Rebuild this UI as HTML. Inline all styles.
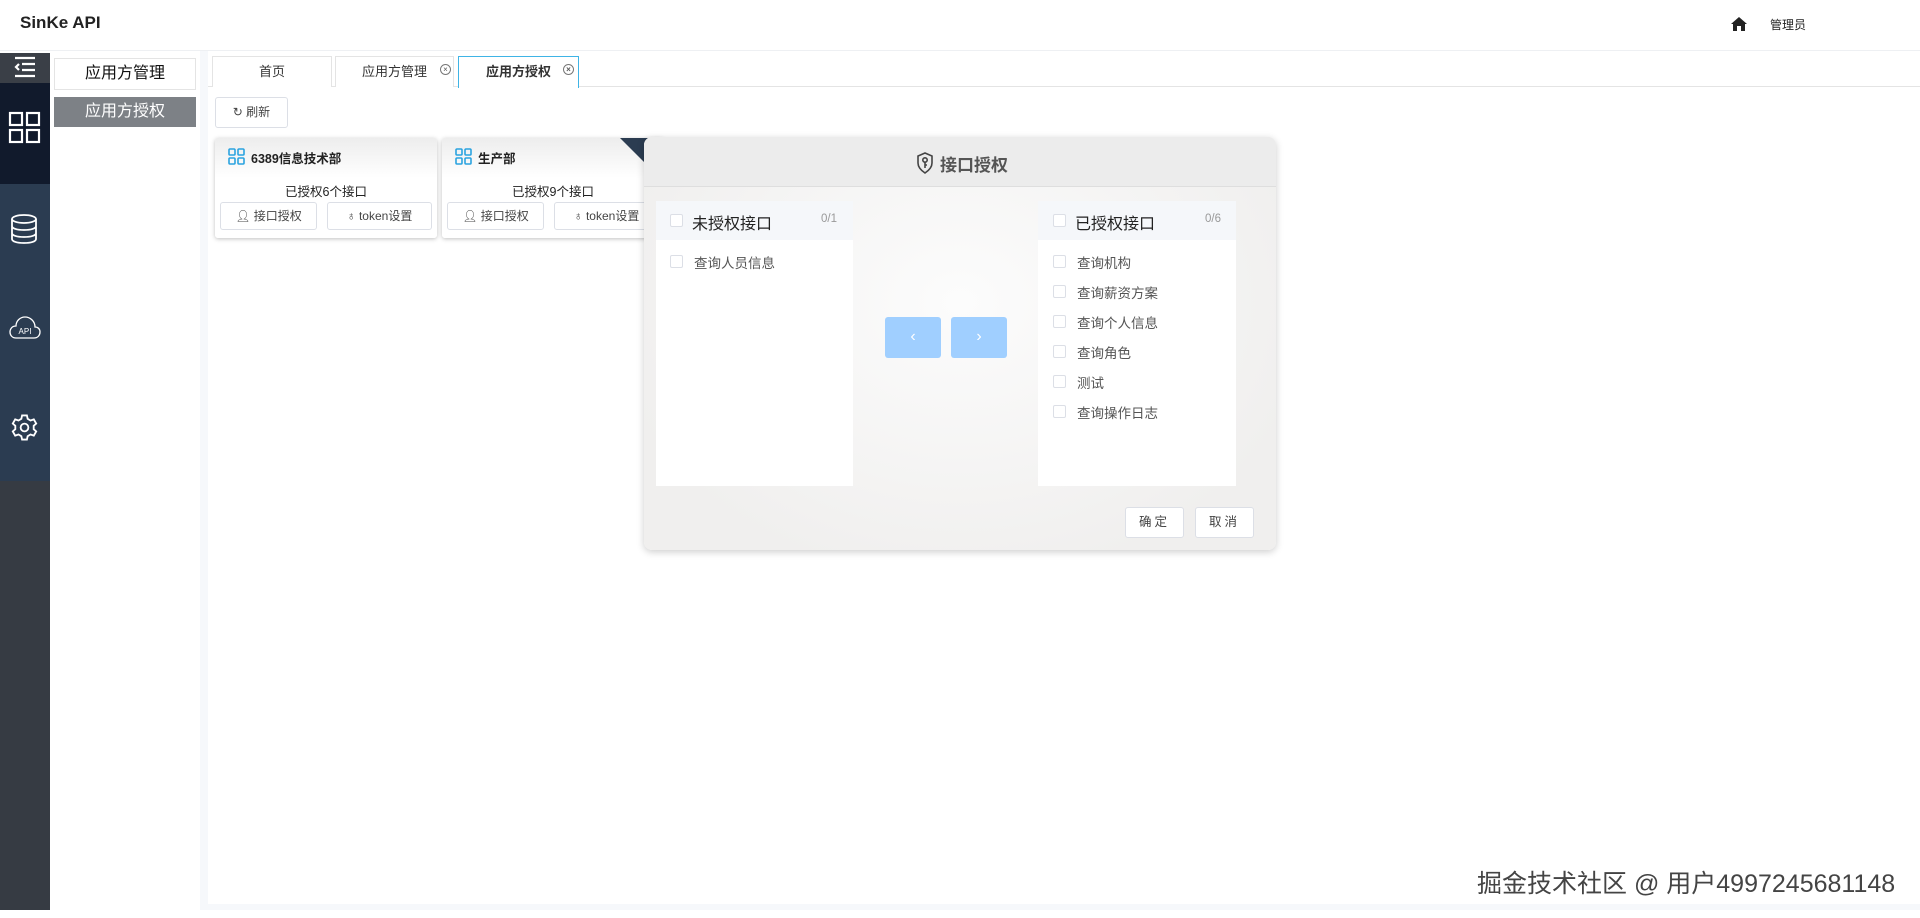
<!DOCTYPE html>
<html><head><meta charset="utf-8"><style>
*{box-sizing:border-box;margin:0;padding:0}
body{width:1920px;height:918px;background:#fff;font-family:"Liberation Sans","Noto Sans CJK SC",sans-serif;position:relative;overflow:hidden;color:#333}
.a{position:absolute}
.tab{position:absolute;top:56px;height:31px;border:1px solid #e4e4e4;border-bottom:none;background:#fff;font-size:13px;text-align:center;line-height:30px;color:#333}
.x{position:absolute;top:7px;width:11px;height:11px;border:1px solid #777;border-radius:50%;font-size:8px;line-height:9px;color:#555;text-align:center}
.btn{position:absolute;border:1px solid #dcdfe6;background:#fff;border-radius:3px;font-size:12px;text-align:center;color:#444}
.cb{position:absolute;width:13px;height:13px;border:1px solid #dcdfe6;border-radius:2px;background:#fff}
.it{position:absolute;font-size:13.5px;color:#555}
</style></head><body>
<div class="a" style="left:0;top:0;width:1920px;height:51px;border-bottom:1px solid #eef0f3"></div>
<div class="a" style="left:20px;top:13px;font-size:17px;font-weight:bold;color:#222">SinKe API</div>
<svg class="a" style="left:1730px;top:16px" width="18" height="16" viewBox="0 0 18 16"><path d="M9 1 L1 8 H3 V15 H7 V10 H11 V15 H15 V8 H17 Z" fill="#222"/></svg>
<div class="a" style="left:1770px;top:16px;font-size:12px;color:#222">管理员</div>
<div class="a" style="left:0;top:53px;width:50px;height:30px;background:#3a3f47"></div>
<svg class="a" style="left:13px;top:55px" width="24" height="24" viewBox="0 0 24 24" stroke="#fff" stroke-width="2.2" fill="none"><path d="M2 3H22M9 9H22M9 15H22M2 21H22M6 9L3 12L6 15"/></svg>
<div class="a" style="left:0;top:83px;width:50px;height:101px;background:#111a2c"></div>
<svg class="a" style="left:8px;top:111px" width="33" height="33" viewBox="0 0 33 33" fill="none" stroke="#fff" stroke-width="2.2"><rect x="2" y="2" width="12" height="12"/><rect x="19" y="2" width="12" height="12"/><rect x="2" y="19" width="12" height="12"/><rect x="19" y="19" width="12" height="12"/></svg>
<div class="a" style="left:0;top:184px;width:50px;height:297px;background:#2b3c51"></div>
<svg class="a" style="left:10px;top:214px" width="28" height="30" viewBox="0 0 28 30" fill="none" stroke="#fff" stroke-width="1.8"><ellipse cx="14" cy="5" rx="12" ry="4"/><path d="M2 5V25C2 27.5 7 29 14 29S26 27.5 26 25V5M2 12C2 14.5 7 16 14 16S26 14.5 26 12M2 19C2 21.5 7 23 14 23S26 21.5 26 19"/></svg>
<svg class="a" style="left:9px;top:316px" width="32" height="24" viewBox="0 0 32 24" fill="none" stroke="#fff" stroke-width="1.3"><path d="M7 22H25C29 22 31 19 31 16C31 13 29 11 26 11C26 5 21 1 16 1C11 1 7 5 7 10C3 10 1 13 1 16C1 19 3 22 7 22Z"/><text x="16" y="18" font-size="8" fill="#fff" stroke="none" text-anchor="middle" font-family="Liberation Sans">API</text></svg>
<svg class="a" style="left:10px;top:413px" width="29" height="29" viewBox="0 0 24 24" fill="none" stroke="#fff" stroke-width="1.5"><circle cx="12" cy="12" r="3.2"/><path d="M10 2H14L14.6 4.8L17 6.2L19.7 5.3L21.7 8.7L19.6 10.6V13.4L21.7 15.3L19.7 18.7L17 17.8L14.6 19.2L14 22H10L9.4 19.2L7 17.8L4.3 18.7L2.3 15.3L4.4 13.4V10.6L2.3 8.7L4.3 5.3L7 6.2L9.4 4.8Z"/></svg>
<div class="a" style="left:0;top:481px;width:50px;height:429px;background:#363b43"></div>
<div class="a" style="left:200px;top:51px;width:8px;height:859px;background:#f6f8fb"></div>
<div class="a" style="left:54px;top:58px;width:142px;height:32px;border:1px solid #e4e4e4;font-size:16px;text-align:center;line-height:30px;color:#111">应用方管理</div>
<div class="a" style="left:54px;top:97px;width:142px;height:30px;background:#7d8186;font-size:16px;text-align:center;line-height:30px;color:#fff">应用方授权</div>
<div class="a" style="left:208px;top:86px;width:1712px;height:1px;background:#e4e4e4"></div>
<div class="tab" style="left:212px;width:120px">首页</div>
<div class="tab" style="left:335px;width:119px">应用方管理<div class="x" style="left:104px">×</div></div>
<div class="tab" style="left:458px;width:121px;border-color:#3fb4e6;height:32px;font-weight:bold">应用方授权<div class="x" style="left:104px">×</div></div>
<div class="btn" style="left:215px;top:97px;width:73px;height:31px;line-height:29px">↻ 刷新</div>
<div class="a" style="left:215px;top:138px;width:222px;height:100px;border-radius:3px;box-shadow:0 1px 4px rgba(0,0,0,.25);background:linear-gradient(#ededed,#fff 40%)">
 <svg class="a" style="left:13px;top:10px" width="17" height="17" viewBox="0 0 17 17" fill="none" stroke="#2aa3e0" stroke-width="1.6"><rect x="1" y="1" width="6" height="6" rx="1"/><rect x="10" y="1" width="6" height="6" rx="1"/><rect x="1" y="10" width="6" height="6" rx="1"/><rect x="10" y="10" width="6" height="6" rx="1"/></svg>
 <div class="a" style="left:36px;top:10px;font-size:12.5px;font-weight:bold;color:#222">6389信息技术部</div>
 <div class="a" style="left:0;top:43px;width:222px;text-align:center;font-size:12.5px;color:#222">已授权6个接口</div>
 <div class="btn" style="left:5px;top:64px;width:97px;height:28px;line-height:26px">👤︎ 接口授权</div>
 <div class="btn" style="left:112px;top:64px;width:105px;height:28px;line-height:26px">♁ token设置</div>
</div>
<div class="a" style="left:442px;top:138px;width:222px;height:100px;border-radius:3px;box-shadow:0 1px 4px rgba(0,0,0,.25);background:linear-gradient(#ededed,#fff 40%);overflow:hidden">
 <svg class="a" style="left:13px;top:10px" width="17" height="17" viewBox="0 0 17 17" fill="none" stroke="#2aa3e0" stroke-width="1.6"><rect x="1" y="1" width="6" height="6" rx="1"/><rect x="10" y="1" width="6" height="6" rx="1"/><rect x="1" y="10" width="6" height="6" rx="1"/><rect x="10" y="10" width="6" height="6" rx="1"/></svg>
 <div class="a" style="left:36px;top:10px;font-size:12.5px;font-weight:bold;color:#222">生产部</div>
 <div class="a" style="left:0;top:43px;width:222px;text-align:center;font-size:12.5px;color:#222">已授权9个接口</div>
 <div class="btn" style="left:5px;top:64px;width:97px;height:28px;line-height:26px">👤︎ 接口授权</div>
 <div class="btn" style="left:112px;top:64px;width:105px;height:28px;line-height:26px">♁ token设置</div>
 <div class="a" style="left:178px;top:0;width:0;height:0;border-left:24px solid transparent;border-top:24px solid #2b3c51;border-right:24px solid #2b3c51;border-bottom:24px solid transparent"></div>
</div>
<div class="a" style="left:644px;top:137px;width:632px;height:413px;border-radius:8px;background:radial-gradient(ellipse at 50% 40%,#fcfcfc,#f0efee 80%);box-shadow:0 2px 8px rgba(0,0,0,.2)">
 <div class="a" style="left:0;top:0;width:632px;height:50px;background:#ececec;border-radius:8px 8px 0 0;border-bottom:1px solid #dedede"></div>
 <svg class="a" style="left:272px;top:15px" width="18" height="22" viewBox="0 0 18 22" fill="none" stroke="#444" stroke-width="1.6"><path d="M9 1L16 4V11C16 16 12 19 9 21C6 19 2 16 2 11V4Z"/><circle cx="9" cy="8" r="2.2"/><path d="M9 10V16M9 13H11"/></svg>
 <div class="a" style="left:296px;top:14px;font-size:17px;color:#555;font-weight:bold">接口授权</div>
 <div class="a" style="left:12px;top:64px;width:197px;height:285px;background:#fff">
  <div class="a" style="left:0;top:0;width:197px;height:39px;background:#f5f7fa"></div>
  <div class="cb" style="left:14px;top:13px"></div>
  <div class="a" style="left:36px;top:9px;font-size:16px;color:#222">未授权接口</div>
  <div class="a" style="left:165px;top:12px;font-size:11.5px;color:#999">0/1</div>
  <div class="cb" style="left:14px;top:54px"></div>
  <div class="it" style="left:38px;top:51px">查询人员信息</div>
 </div>
 <div class="a" style="left:241px;top:180px;width:56px;height:41px;background:#a0cfff;border-radius:3px;color:#fff;text-align:center;line-height:40px;font-size:16px">‹</div>
 <div class="a" style="left:307px;top:180px;width:56px;height:41px;background:#a0cfff;border-radius:3px;color:#fff;text-align:center;line-height:40px;font-size:16px">›</div>
 <div class="a" style="left:394px;top:64px;width:198px;height:285px;background:#fff">
  <div class="a" style="left:0;top:0;width:198px;height:39px;background:#f5f7fa"></div>
  <div class="cb" style="left:15px;top:13px"></div>
  <div class="a" style="left:37px;top:9px;font-size:16px;color:#222">已授权接口</div>
  <div class="a" style="left:167px;top:12px;font-size:11.5px;color:#999">0/6</div>
  <div class="cb" style="left:15px;top:54px"></div><div class="it" style="left:39px;top:51px">查询机构</div>
  <div class="cb" style="left:15px;top:84px"></div><div class="it" style="left:39px;top:81px">查询薪资方案</div>
  <div class="cb" style="left:15px;top:114px"></div><div class="it" style="left:39px;top:111px">查询个人信息</div>
  <div class="cb" style="left:15px;top:144px"></div><div class="it" style="left:39px;top:141px">查询角色</div>
  <div class="cb" style="left:15px;top:174px"></div><div class="it" style="left:39px;top:171px">测试</div>
  <div class="cb" style="left:15px;top:204px"></div><div class="it" style="left:39px;top:201px">查询操作日志</div>
 </div>
 <div class="btn" style="left:481px;top:370px;width:59px;height:31px;line-height:29px;font-size:12.5px;letter-spacing:3px">确定</div>
 <div class="btn" style="left:551px;top:370px;width:59px;height:31px;line-height:29px;font-size:12.5px;letter-spacing:3px">取消</div>
</div>
<div class="a" style="left:208px;top:904px;width:1712px;height:6px;background:#f6f8fb"></div>
<div class="a" style="left:1477px;top:864px;font-size:25px;color:#444;text-shadow:0 0 2px #fff;white-space:nowrap">掘金技术社区 @ 用户4997245681148</div>
</body></html>
